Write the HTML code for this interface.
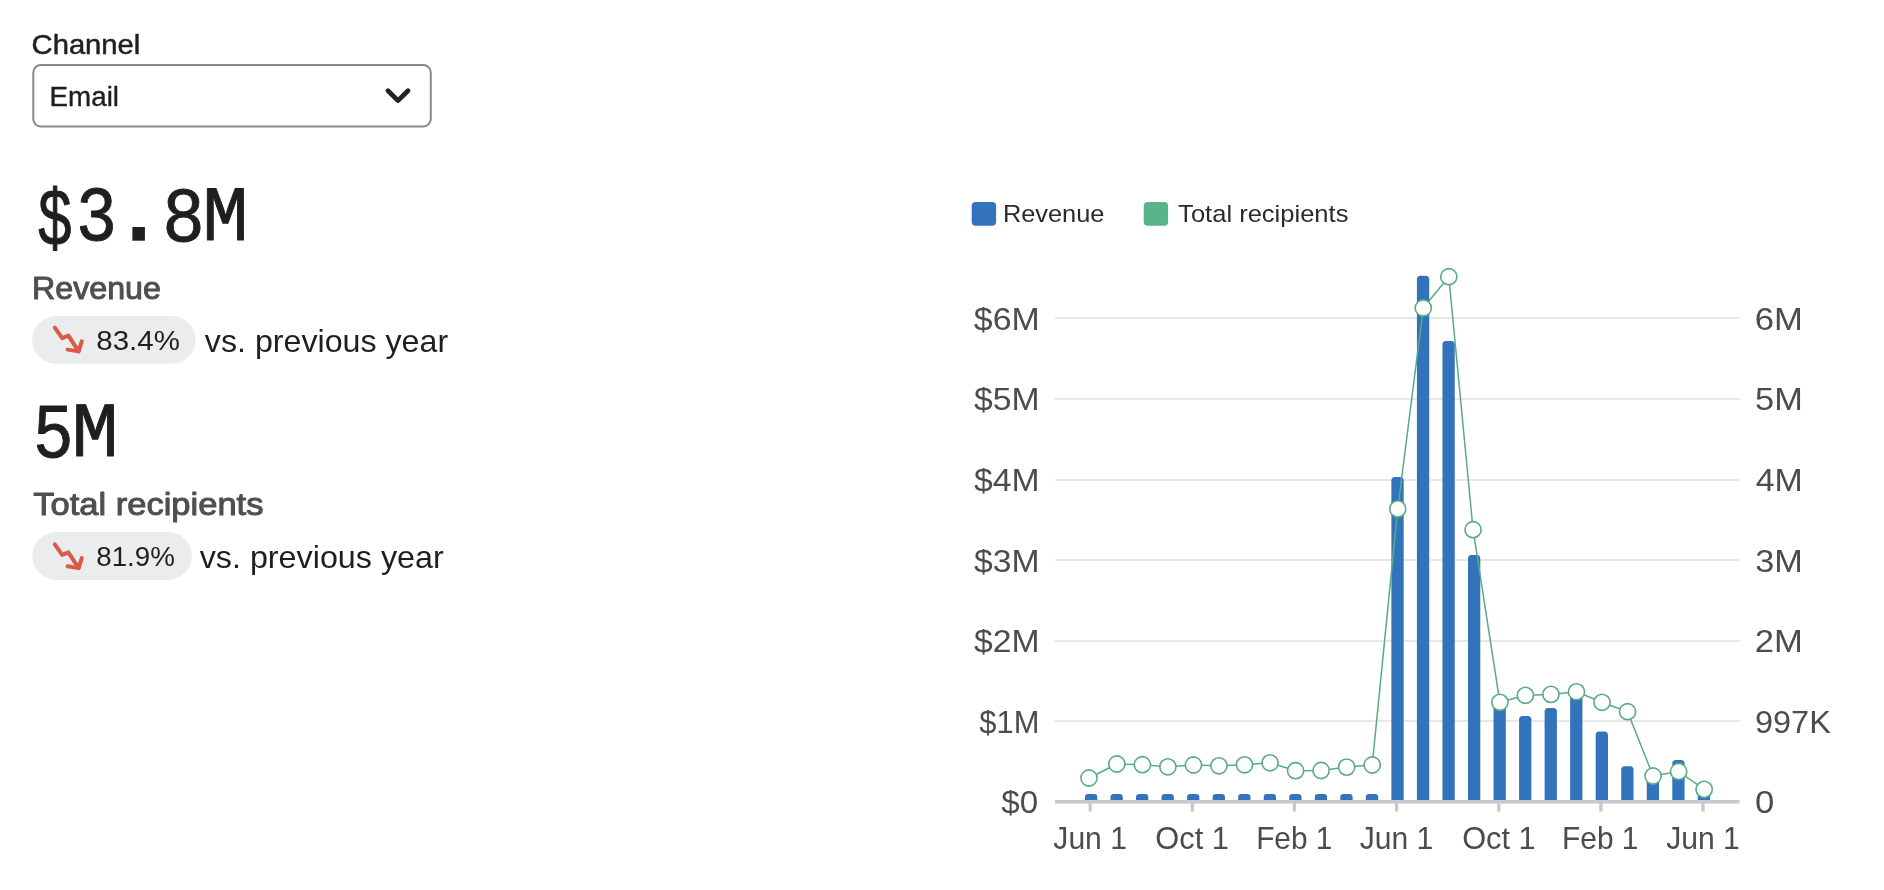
<!DOCTYPE html>
<html><head><meta charset="utf-8">
<style>
html,body{margin:0;padding:0;background:#fff;width:1884px;height:890px;overflow:hidden}
svg{display:block;will-change:transform}

</style></head><body>
<svg width="1884" height="890" viewBox="0 0 1884 890">
<rect width="1884" height="890" fill="#fff"/>
<rect x="33.3" y="65.0" width="397.5" height="61.4" rx="7.5" fill="#fff" stroke="#8a8a8a" stroke-width="2"/>
<polyline points="388.0,90.8 398,100.6 408.0,90.8" fill="none" stroke="#222" stroke-width="4.8" stroke-linecap="round" stroke-linejoin="round"/>
<rect x="32.2" y="316" width="163.3" height="47.8" rx="23.9" fill="#ebecee"/>
<polyline points="54.8,327.6 62.2,338.2 68.4,335.6 78.6,351.4" fill="none" stroke="#da5a48" stroke-width="4" stroke-linecap="round" stroke-linejoin="round"/>
<polyline points="67.6,349.6 78.6,351.4 81.8,341.4" fill="none" stroke="#da5a48" stroke-width="4" stroke-linecap="round" stroke-linejoin="round"/>
<rect x="32.4" y="532" width="159.5" height="47.9" rx="23.9" fill="#ebecee"/>
<g transform="translate(0,216.7)">
<polyline points="54.8,327.6 62.2,338.2 68.4,335.6 78.6,351.4" fill="none" stroke="#da5a48" stroke-width="4" stroke-linecap="round" stroke-linejoin="round"/>
<polyline points="67.6,349.6 78.6,351.4 81.8,341.4" fill="none" stroke="#da5a48" stroke-width="4" stroke-linecap="round" stroke-linejoin="round"/>
</g>
<rect x="971.7" y="202.1" width="24.4" height="23.6" rx="4" fill="#3373bb"/>
<rect x="1143.7" y="202.1" width="24.4" height="23.6" rx="4" fill="#58b48b"/>
<rect x="1055" y="317" width="684.5" height="2" fill="#e6e7ea"/>
<rect x="1055" y="398" width="684.5" height="2" fill="#e6e7ea"/>
<rect x="1055" y="479" width="684.5" height="2" fill="#e6e7ea"/>
<rect x="1055" y="559" width="684.5" height="2" fill="#e6e7ea"/>
<rect x="1055" y="640" width="684.5" height="2" fill="#e6e7ea"/>
<rect x="1055" y="720" width="684.5" height="2" fill="#e6e7ea"/>
<path d="M1084.95,800.4 V797.20 Q1084.95,794.00 1088.15,794.00 H1094.05 Q1097.25,794.00 1097.25,797.20 V800.4 Z" fill="#3373bb"/>
<path d="M1110.49,800.4 V797.20 Q1110.49,794.00 1113.69,794.00 H1119.59 Q1122.79,794.00 1122.79,797.20 V800.4 Z" fill="#3373bb"/>
<path d="M1136.02,800.4 V797.20 Q1136.02,794.00 1139.22,794.00 H1145.12 Q1148.32,794.00 1148.32,797.20 V800.4 Z" fill="#3373bb"/>
<path d="M1161.56,800.4 V797.20 Q1161.56,794.00 1164.76,794.00 H1170.66 Q1173.86,794.00 1173.86,797.20 V800.4 Z" fill="#3373bb"/>
<path d="M1187.09,800.4 V797.20 Q1187.09,794.00 1190.29,794.00 H1196.19 Q1199.39,794.00 1199.39,797.20 V800.4 Z" fill="#3373bb"/>
<path d="M1212.63,800.4 V797.20 Q1212.63,794.00 1215.83,794.00 H1221.73 Q1224.93,794.00 1224.93,797.20 V800.4 Z" fill="#3373bb"/>
<path d="M1238.17,800.4 V797.20 Q1238.17,794.00 1241.37,794.00 H1247.27 Q1250.47,794.00 1250.47,797.20 V800.4 Z" fill="#3373bb"/>
<path d="M1263.70,800.4 V797.20 Q1263.70,794.00 1266.90,794.00 H1272.80 Q1276.00,794.00 1276.00,797.20 V800.4 Z" fill="#3373bb"/>
<path d="M1289.24,800.4 V797.20 Q1289.24,794.00 1292.44,794.00 H1298.34 Q1301.54,794.00 1301.54,797.20 V800.4 Z" fill="#3373bb"/>
<path d="M1314.77,800.4 V797.20 Q1314.77,794.00 1317.97,794.00 H1323.87 Q1327.07,794.00 1327.07,797.20 V800.4 Z" fill="#3373bb"/>
<path d="M1340.31,800.4 V797.20 Q1340.31,794.00 1343.51,794.00 H1349.41 Q1352.61,794.00 1352.61,797.20 V800.4 Z" fill="#3373bb"/>
<path d="M1365.85,800.4 V797.20 Q1365.85,794.00 1369.05,794.00 H1374.95 Q1378.15,794.00 1378.15,797.20 V800.4 Z" fill="#3373bb"/>
<path d="M1391.38,800.4 V480.50 Q1391.38,476.90 1394.98,476.90 H1400.08 Q1403.68,476.90 1403.68,480.50 V800.4 Z" fill="#3373bb"/>
<path d="M1416.92,800.4 V279.30 Q1416.92,275.70 1420.52,275.70 H1425.62 Q1429.22,275.70 1429.22,279.30 V800.4 Z" fill="#3373bb"/>
<path d="M1442.45,800.4 V344.60 Q1442.45,341.00 1446.05,341.00 H1451.15 Q1454.75,341.00 1454.75,344.60 V800.4 Z" fill="#3373bb"/>
<path d="M1467.99,800.4 V558.50 Q1467.99,554.90 1471.59,554.90 H1476.69 Q1480.29,554.90 1480.29,558.50 V800.4 Z" fill="#3373bb"/>
<path d="M1493.53,800.4 V708.60 Q1493.53,705.00 1497.13,705.00 H1502.23 Q1505.83,705.00 1505.83,708.60 V800.4 Z" fill="#3373bb"/>
<path d="M1519.06,800.4 V719.70 Q1519.06,716.10 1522.66,716.10 H1527.76 Q1531.36,716.10 1531.36,719.70 V800.4 Z" fill="#3373bb"/>
<path d="M1544.60,800.4 V711.70 Q1544.60,708.10 1548.20,708.10 H1553.30 Q1556.90,708.10 1556.90,711.70 V800.4 Z" fill="#3373bb"/>
<path d="M1570.13,800.4 V697.60 Q1570.13,694.00 1573.73,694.00 H1578.83 Q1582.43,694.00 1582.43,697.60 V800.4 Z" fill="#3373bb"/>
<path d="M1595.67,800.4 V735.00 Q1595.67,731.40 1599.27,731.40 H1604.37 Q1607.97,731.40 1607.97,735.00 V800.4 Z" fill="#3373bb"/>
<path d="M1621.21,800.4 V769.90 Q1621.21,766.30 1624.81,766.30 H1629.91 Q1633.51,766.30 1633.51,769.90 V800.4 Z" fill="#3373bb"/>
<path d="M1646.74,800.4 V781.60 Q1646.74,778.00 1650.34,778.00 H1655.44 Q1659.04,778.00 1659.04,781.60 V800.4 Z" fill="#3373bb"/>
<path d="M1672.28,800.4 V763.60 Q1672.28,760.00 1675.88,760.00 H1680.98 Q1684.58,760.00 1684.58,763.60 V800.4 Z" fill="#3373bb"/>
<path d="M1697.81,800.4 V795.60 Q1697.81,792.00 1701.41,792.00 H1706.51 Q1710.11,792.00 1710.11,795.60 V800.4 Z" fill="#3373bb"/>
<rect x="1055" y="800" width="684.5" height="3.6" fill="#c6c9cf"/>
<rect x="1088.50" y="803" width="3.3" height="8.6" fill="#c6c9cf"/>
<rect x="1190.64" y="803" width="3.3" height="8.6" fill="#c6c9cf"/>
<rect x="1292.79" y="803" width="3.3" height="8.6" fill="#c6c9cf"/>
<rect x="1394.93" y="803" width="3.3" height="8.6" fill="#c6c9cf"/>
<rect x="1497.08" y="803" width="3.3" height="8.6" fill="#c6c9cf"/>
<rect x="1599.22" y="803" width="3.3" height="8.6" fill="#c6c9cf"/>
<rect x="1701.36" y="803" width="3.3" height="8.6" fill="#c6c9cf"/>
<polyline points="1089.00,778.00 1116.84,764.00 1142.37,764.70 1167.91,766.80 1193.44,765.00 1218.98,765.80 1244.52,764.80 1270.05,762.80 1295.59,770.70 1321.12,770.50 1346.66,767.10 1372.20,765.00 1397.73,508.90 1423.27,308.00 1448.80,276.70 1473.04,529.70 1499.88,702.30 1525.41,695.30 1550.95,694.40 1576.48,691.80 1602.02,702.30 1627.56,711.70 1653.09,776.00 1678.63,771.50 1704.16,789.40" fill="none" stroke="#5aaa86" stroke-width="1.5" stroke-linejoin="round"/>
<circle cx="1089.00" cy="778.00" r="8.1" fill="#fff" stroke="#5aaa86" stroke-width="1.6"/>
<circle cx="1116.84" cy="764.00" r="8.1" fill="#fff" stroke="#5aaa86" stroke-width="1.6"/>
<circle cx="1142.37" cy="764.70" r="8.1" fill="#fff" stroke="#5aaa86" stroke-width="1.6"/>
<circle cx="1167.91" cy="766.80" r="8.1" fill="#fff" stroke="#5aaa86" stroke-width="1.6"/>
<circle cx="1193.44" cy="765.00" r="8.1" fill="#fff" stroke="#5aaa86" stroke-width="1.6"/>
<circle cx="1218.98" cy="765.80" r="8.1" fill="#fff" stroke="#5aaa86" stroke-width="1.6"/>
<circle cx="1244.52" cy="764.80" r="8.1" fill="#fff" stroke="#5aaa86" stroke-width="1.6"/>
<circle cx="1270.05" cy="762.80" r="8.1" fill="#fff" stroke="#5aaa86" stroke-width="1.6"/>
<circle cx="1295.59" cy="770.70" r="8.1" fill="#fff" stroke="#5aaa86" stroke-width="1.6"/>
<circle cx="1321.12" cy="770.50" r="8.1" fill="#fff" stroke="#5aaa86" stroke-width="1.6"/>
<circle cx="1346.66" cy="767.10" r="8.1" fill="#fff" stroke="#5aaa86" stroke-width="1.6"/>
<circle cx="1372.20" cy="765.00" r="8.1" fill="#fff" stroke="#5aaa86" stroke-width="1.6"/>
<circle cx="1397.73" cy="508.90" r="8.1" fill="#fff" stroke="#5aaa86" stroke-width="1.6"/>
<circle cx="1423.27" cy="308.00" r="8.1" fill="#fff" stroke="#5aaa86" stroke-width="1.6"/>
<circle cx="1448.80" cy="276.70" r="8.1" fill="#fff" stroke="#5aaa86" stroke-width="1.6"/>
<circle cx="1473.04" cy="529.70" r="8.1" fill="#fff" stroke="#5aaa86" stroke-width="1.6"/>
<circle cx="1499.88" cy="702.30" r="8.1" fill="#fff" stroke="#5aaa86" stroke-width="1.6"/>
<circle cx="1525.41" cy="695.30" r="8.1" fill="#fff" stroke="#5aaa86" stroke-width="1.6"/>
<circle cx="1550.95" cy="694.40" r="8.1" fill="#fff" stroke="#5aaa86" stroke-width="1.6"/>
<circle cx="1576.48" cy="691.80" r="8.1" fill="#fff" stroke="#5aaa86" stroke-width="1.6"/>
<circle cx="1602.02" cy="702.30" r="8.1" fill="#fff" stroke="#5aaa86" stroke-width="1.6"/>
<circle cx="1627.56" cy="711.70" r="8.1" fill="#fff" stroke="#5aaa86" stroke-width="1.6"/>
<circle cx="1653.09" cy="776.00" r="8.1" fill="#fff" stroke="#5aaa86" stroke-width="1.6"/>
<circle cx="1678.63" cy="771.50" r="8.1" fill="#fff" stroke="#5aaa86" stroke-width="1.6"/>
<circle cx="1704.16" cy="789.40" r="8.1" fill="#fff" stroke="#5aaa86" stroke-width="1.6"/>
<text x="31.57" y="53.95" font-family="Liberation Sans" font-weight="normal" font-size="27.264705882352942" fill="#1f1f1f" textLength="108.74" lengthAdjust="spacingAndGlyphs" stroke="#1f1f1f" stroke-width="0.5" stroke-linejoin="round">Channel</text>
<text x="49.63" y="105.89999999999999" font-family="Liberation Sans" font-weight="normal" font-size="27.41176470588235" fill="#1f1f1f" textLength="69.33" lengthAdjust="spacingAndGlyphs" stroke="#1f1f1f" stroke-width="0.4" stroke-linejoin="round">Email</text>
<text x="32.06" y="299.3" font-family="Liberation Sans" font-weight="normal" font-size="31.529411764705884" fill="#4d4f52" textLength="128.87" lengthAdjust="spacingAndGlyphs" stroke="#4d4f52" stroke-width="1.0" stroke-linejoin="round">Revenue</text>
<text x="96.32" y="349.6" font-family="Liberation Sans" font-weight="normal" font-size="28" fill="#1f1f1f" textLength="83.53" lengthAdjust="spacingAndGlyphs">83.4%</text>
<text x="204.89" y="351.8" font-family="Liberation Sans" font-weight="normal" font-size="31.6" fill="#1f1f1f" textLength="243.24" lengthAdjust="spacingAndGlyphs">vs. previous year</text>
<text x="33.22" y="515.4" font-family="Liberation Sans" font-weight="normal" font-size="31.529411764705884" fill="#4d4f52" textLength="230.22" lengthAdjust="spacingAndGlyphs" stroke="#4d4f52" stroke-width="1.0" stroke-linejoin="round">Total recipients</text>
<text x="96.30" y="565.6" font-family="Liberation Sans" font-weight="normal" font-size="28" fill="#1f1f1f" textLength="78.59" lengthAdjust="spacingAndGlyphs">81.9%</text>
<text x="199.69" y="567.6" font-family="Liberation Sans" font-weight="normal" font-size="31.6" fill="#1f1f1f" textLength="244.05" lengthAdjust="spacingAndGlyphs">vs. previous year</text>
<text x="1002.92" y="221.8" font-family="Liberation Sans" font-weight="normal" font-size="24" fill="#2a2a2a" textLength="101.51" lengthAdjust="spacingAndGlyphs">Revenue</text>
<text x="1178.13" y="221.8" font-family="Liberation Sans" font-weight="normal" font-size="24" fill="#2a2a2a" textLength="170.30" lengthAdjust="spacingAndGlyphs">Total recipients</text>
<text x="973.84" y="329.8" font-family="Liberation Sans" font-weight="normal" font-size="32" fill="#4a4c4f" textLength="65.84" lengthAdjust="spacingAndGlyphs">$6M</text>
<text x="1754.74" y="329.8" font-family="Liberation Sans" font-weight="normal" font-size="32" fill="#4a4c4f" textLength="48.10" lengthAdjust="spacingAndGlyphs">6M</text>
<text x="974.14" y="410.40000000000003" font-family="Liberation Sans" font-weight="normal" font-size="32" fill="#4a4c4f" textLength="65.52" lengthAdjust="spacingAndGlyphs">$5M</text>
<text x="1755.13" y="410.40000000000003" font-family="Liberation Sans" font-weight="normal" font-size="32" fill="#4a4c4f" textLength="47.69" lengthAdjust="spacingAndGlyphs">5M</text>
<text x="974.14" y="491.0" font-family="Liberation Sans" font-weight="normal" font-size="32" fill="#4a4c4f" textLength="65.52" lengthAdjust="spacingAndGlyphs">$4M</text>
<text x="1755.72" y="491.0" font-family="Liberation Sans" font-weight="normal" font-size="32" fill="#4a4c4f" textLength="47.06" lengthAdjust="spacingAndGlyphs">4M</text>
<text x="974.14" y="571.5999999999999" font-family="Liberation Sans" font-weight="normal" font-size="32" fill="#4a4c4f" textLength="65.52" lengthAdjust="spacingAndGlyphs">$3M</text>
<text x="1755.19" y="571.5999999999999" font-family="Liberation Sans" font-weight="normal" font-size="32" fill="#4a4c4f" textLength="47.62" lengthAdjust="spacingAndGlyphs">3M</text>
<text x="974.14" y="652.1999999999999" font-family="Liberation Sans" font-weight="normal" font-size="32" fill="#4a4c4f" textLength="65.52" lengthAdjust="spacingAndGlyphs">$2M</text>
<text x="1754.76" y="652.1999999999999" font-family="Liberation Sans" font-weight="normal" font-size="32" fill="#4a4c4f" textLength="48.08" lengthAdjust="spacingAndGlyphs">2M</text>
<text x="979.37" y="732.8" font-family="Liberation Sans" font-weight="normal" font-size="32" fill="#4a4c4f" textLength="60.06" lengthAdjust="spacingAndGlyphs">$1M</text>
<text x="1754.98" y="732.8" font-family="Liberation Sans" font-weight="normal" font-size="32" fill="#4a4c4f" textLength="75.89" lengthAdjust="spacingAndGlyphs">997K</text>
<text x="1001.34" y="813.3999999999999" font-family="Liberation Sans" font-weight="normal" font-size="32" fill="#4a4c4f" textLength="36.85" lengthAdjust="spacingAndGlyphs">$0</text>
<text x="1755.14" y="813.3999999999999" font-family="Liberation Sans" font-weight="normal" font-size="32" fill="#4a4c4f" textLength="19.31" lengthAdjust="spacingAndGlyphs">0</text>
<text x="1053.33" y="849.2" font-family="Liberation Sans" font-weight="normal" font-size="32" fill="#4a4c4f" textLength="73.64" lengthAdjust="spacingAndGlyphs">Jun 1</text>
<text x="1155.34" y="849.2" font-family="Liberation Sans" font-weight="normal" font-size="32" fill="#4a4c4f" textLength="73.56" lengthAdjust="spacingAndGlyphs">Oct 1</text>
<text x="1256.16" y="849.2" font-family="Liberation Sans" font-weight="normal" font-size="32" fill="#4a4c4f" textLength="76.20" lengthAdjust="spacingAndGlyphs">Feb 1</text>
<text x="1359.63" y="849.2" font-family="Liberation Sans" font-weight="normal" font-size="32" fill="#4a4c4f" textLength="73.54" lengthAdjust="spacingAndGlyphs">Jun 1</text>
<text x="1462.14" y="849.2" font-family="Liberation Sans" font-weight="normal" font-size="32" fill="#4a4c4f" textLength="73.56" lengthAdjust="spacingAndGlyphs">Oct 1</text>
<text x="1562.05" y="849.2" font-family="Liberation Sans" font-weight="normal" font-size="32" fill="#4a4c4f" textLength="76.41" lengthAdjust="spacingAndGlyphs">Feb 1</text>
<text x="1666.13" y="849.2" font-family="Liberation Sans" font-weight="normal" font-size="32" fill="#4a4c4f" textLength="73.74" lengthAdjust="spacingAndGlyphs">Jun 1</text>
<text transform="translate(37.032,245.426) scale(0.5951,0.8169)" x="0" y="0" font-family="Liberation Mono" font-size="100.0" fill="#1f1f1f" stroke="#1f1f1f" stroke-width="1.275" stroke-linejoin="round">$</text>
<text transform="translate(76.092,240.386) scale(0.6813,0.7824)" x="0" y="0" font-family="Liberation Mono" font-size="100.0" fill="#1f1f1f" stroke="#1f1f1f" stroke-width="1.230" stroke-linejoin="round">3</text>
<text transform="translate(162.241,240.583) scale(0.7097,0.7853)" x="0" y="0" font-family="Liberation Mono" font-size="100.0" fill="#1f1f1f" stroke="#1f1f1f" stroke-width="1.204" stroke-linejoin="round">8</text>
<text transform="translate(202.536,240.250) scale(0.7643,0.7758)" x="0" y="0" font-family="Liberation Mono" font-size="100.0" fill="#1f1f1f" stroke="#1f1f1f" stroke-width="1.169" stroke-linejoin="round">M</text>
<text transform="translate(33.018,456.682) scale(0.6770,0.7869)" x="0" y="0" font-family="Liberation Mono" font-size="100.0" fill="#1f1f1f" stroke="#1f1f1f" stroke-width="1.230" stroke-linejoin="round">5</text>
<text transform="translate(71.643,456.350) scale(0.7791,0.7758)" x="0" y="0" font-family="Liberation Mono" font-size="100.0" fill="#1f1f1f" stroke="#1f1f1f" stroke-width="1.158" stroke-linejoin="round">M</text>
<rect x="132.4" y="227.0" width="12.5" height="13.7" fill="#1f1f1f"/>
</svg>
</body></html>
